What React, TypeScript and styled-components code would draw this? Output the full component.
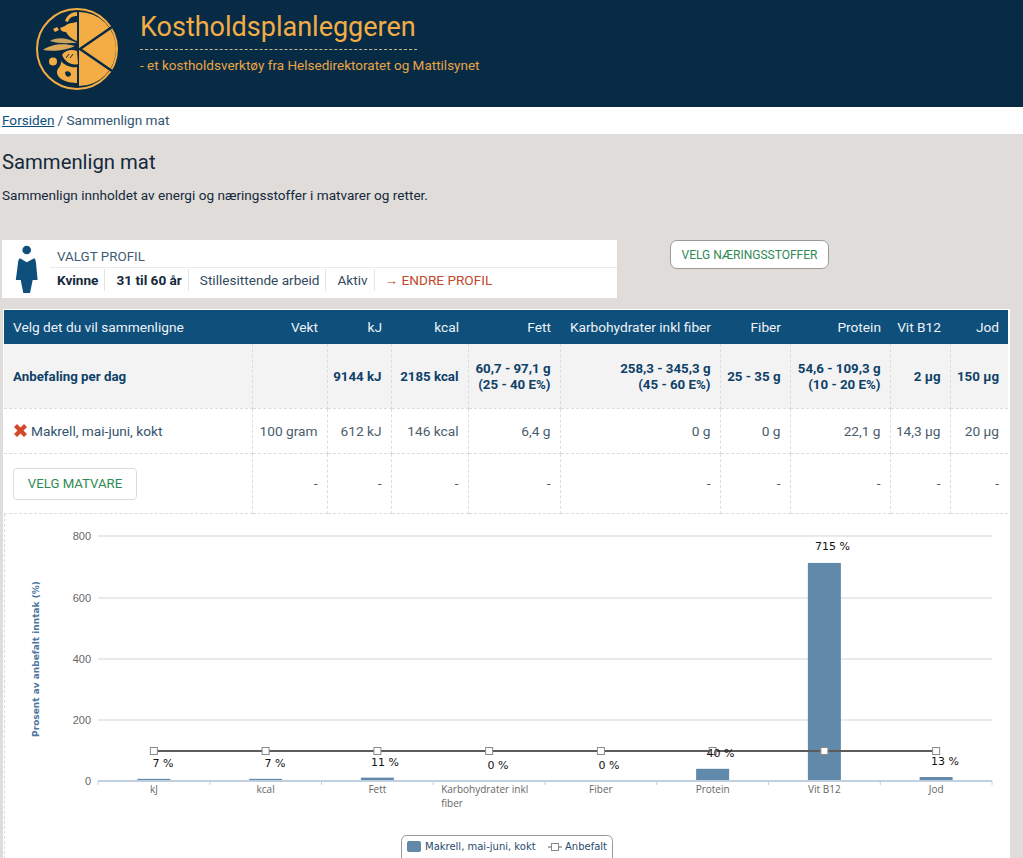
import styled, { createGlobalStyle } from "styled-components";

const GlobalStyle = createGlobalStyle`
  html, body {
    margin: 0;
    padding: 0;
    height: 858px;
    overflow: hidden;
    background: #e0dcd9;
    font-family: "Roboto", "Liberation Sans", sans-serif;
    color: #14293b;
  }
`;

const Header = styled.header`
  height: 107px;
  background: #082b45;
  display: flex;
  align-items: flex-start;
  padding: 4px 0 0 36px;
  box-sizing: border-box;
  gap: 14px;
`;

const Brand = styled.div`
  color: #f4ad45;
  padding-top: 6px;
`;

const BrandTitle = styled.div`
  font-size: 27px;
  line-height: 34px;
  width: 277px;
  height: 39px;
  border-bottom: 1px dashed #c9b48c;
`;

const BrandSub = styled.div`
  font-size: 13.5px;
  line-height: 18px;
  margin-top: 6px;
  color: #e8a546;
`;

const Crumbs = styled.nav`
  height: 27px;
  background: #fff;
  padding-left: 2px;
  font-size: 13.6px;
  line-height: 26px;
  color: #33536e;

  a {
    color: #0e4f7c;
    text-decoration: underline;
    margin-right: 3px;
  }
`;

const Main = styled.main`
  padding: 0 0 0 2px;
`;

const Title = styled.h1`
  margin: 0;
  padding-top: 15px;
  font-size: 20.3px;
  line-height: 26px;
  font-weight: 400;
`;

const Intro = styled.p`
  margin: 10px 0 0;
  font-size: 13.6px;
  line-height: 20px;
`;

const ProfileRow = styled.div`
  display: flex;
  align-items: flex-start;
  gap: 53px;
  margin-top: 35px;
`;

const ProfileCard = styled.section`
  width: 615px;
  height: 58px;
  background: #fff;
  display: flex;
`;

const ProfileIcon = styled.div`
  width: 48px;
  padding: 5px 0 0 13px;
  box-sizing: border-box;
`;

const ProfileBody = styled.div`
  flex: 1;
`;

const ProfileLabel = styled.div`
  height: 28px;
  box-sizing: border-box;
  border-bottom: 1px solid #eceaea;
  padding: 8px 0 0 7px;
  font-size: 13.4px;
  line-height: 18px;
  color: #3f5b74;
`;

const ProfileFacts = styled.div`
  display: flex;
  align-items: center;
  height: 24px;
  margin-top: 0;
`;

const Fact = styled.span<{ $strong?: boolean; $first?: boolean }>`
  padding: 0 6px 0 ${({ $first }) => ($first ? "7px" : "11px")};
  font-size: 13.6px;
  line-height: 22px;
  font-weight: ${({ $strong }) => ($strong ? 700 : 400)};
  color: ${({ $strong }) => ($strong ? "#14293b" : "#33495d")};
  border-right: 1px solid #e6e4e4;
`;

const ChangeLink = styled.a`
  padding-left: 10px;
  font-size: 13.6px;
  color: #c0492b;
`;

const OutlineButton = styled.button`
  width: 159px;
  height: 29px;
  background: #fff;
  border: 1px solid #9a9a9a;
  border-radius: 7px;
  font-family: inherit;
  font-size: 12px;
  color: #2f8a55;
  padding: 0;
`;

const TableFrame = styled.div`
  margin: 11px 0 0 1px;
  width: 1007px;
  height: 560px;
  background: #fff;
  border: 1px solid #fff;
  border-bottom: 0;
  box-sizing: border-box;
`;

const Table = styled.table`
  width: 1004px;
  table-layout: fixed;
  border-collapse: collapse;
  font-size: 13.7px;
`;

const HeadCell = styled.th<{ $left?: boolean }>`
  height: 34px;
  padding: 0 9px 0 ${({ $left }) => ($left ? "9px" : "0")};
  background: #0e4f7c;
  color: #eef3f7;
  font-weight: 400;
  text-align: ${({ $left }) => ($left ? "left" : "right")};
  white-space: nowrap;
`;

const Cell = styled.td<{ $left?: boolean }>`
  padding: 0 9px 0 ${({ $left }) => ($left ? "9px" : "0")};
  text-align: ${({ $left }) => ($left ? "left" : "right")};
  border: 1px dashed #dcdcdc;
  border-top: 0;
  color: #4a5d6c;
  line-height: 16px;
  white-space: nowrap;

  &:first-child {
    border-left: 0;
  }

  &:last-child {
    border-right: 0;
  }
`;

const RecommendRow = styled.tr`
  height: 64px;
  background: #f3f3f3;

  td {
    padding-top: 3px;
    font-size: 13.3px;
    font-weight: 700;
    color: #0e4168;
  }
`;

const FoodRow = styled.tr`
  height: 45px;
`;

const PickRow = styled.tr`
  height: 60px;
`;

const FoodName = styled.span`
  display: flex;
  align-items: center;
  gap: 3px;
  color: #33536e;
`;

const PickButton = styled.button`
  width: 124px;
  height: 32px;
  margin-top: 1px;
  background: #fff;
  border: 1px solid #dcdcdc;
  border-radius: 4px;
  font-family: inherit;
  font-size: 13.2px;
  color: #2f8a55;
  padding: 0;
`;

const ChartBox = styled.div`
  border-left: 1px dashed #d8d8d8;
  height: 350px;
`;

const ChartSvg = styled.svg`
  display: block;
`;

const columns = [248, 75, 64, 77, 92, 160, 70, 100, 60, 58];

const headers = [
  "Velg det du vil sammenligne",
  "Vekt",
  "kJ",
  "kcal",
  "Fett",
  "Karbohydrater inkl fiber",
  "Fiber",
  "Protein",
  "Vit B12",
  "Jod",
];

const recommended = [
  "Anbefaling per dag",
  "",
  "9144 kJ",
  "2185 kcal",
  "60,7 - 97,1 g\n(25 - 40 E%)",
  "258,3 - 345,3 g\n(45 - 60 E%)",
  "25 - 35 g",
  "54,6 - 109,3 g\n(10 - 20 E%)",
  "2 µg",
  "150 µg",
];

const food = ["100 gram", "612 kJ", "146 kcal", "6,4 g", "0 g", "0 g", "22,1 g", "14,3 µg", "20 µg"];

// chart coordinates are relative to the svg, which starts at page x=5, y=514
const plotLeft = 93;
const plotWidth = 894;
const zeroY = 267;
const slot = plotWidth / 8;

const series = [
  { name: "kJ", value: 7, labelY: 249, labelX: 158 },
  { name: "kcal", value: 7, labelY: 249, labelX: 270 },
  { name: "Fett", value: 11, labelY: 248, labelX: 380 },
  { name: "Karbohydrater inkl", second: "fiber", value: 0, labelY: 251, labelX: 493 },
  { name: "Fiber", value: 0, labelY: 251, labelX: 604 },
  { name: "Protein", value: 40, labelY: 239, labelX: 715.5 },
  { name: "Vit B12", value: 715, labelY: 32, labelX: 827.5 },
  { name: "Jod", value: 13, labelY: 247, labelX: 940 },
];

const grid = [
  { label: "800", y: 22 },
  { label: "600", y: 84 },
  { label: "400", y: 145 },
  { label: "200", y: 206 },
];

function Logo() {
  return (
    <svg width="90" height="90" viewBox="0 0 90 90">
      <circle cx="41" cy="45" r="40" fill="none" stroke="#f4ad45" strokeWidth="2" />
      <path d="M43 8 A37 37 0 0 1 43 82 Z" fill="#f4ad45" />
      <path d="M76 23 L44 45 L76 67" fill="none" stroke="#082b45" strokeWidth="2.5" />
      <path d="M29 17 C31 11 36 8 41 8 L41 12 C36 12 33 14 32 18 Z" fill="#f4ad45" />
      <path d="M17 25 L21 23 L23 26 L19 28 Z" fill="#f4ad45" />
      <path d="M24 24 L29 22 C32 19 36 19 41 18 L41 37 C35 35 32 31 30 28 C27 28 25 27 24 24 Z" fill="#f4ad45" />
      <path d="M14 37 C20 33 31 33 41 39 C31 39 22 40 14 37 Z" fill="#c9a25d" />
      <path d="M7 46 C15 40 28 39 39 42 C31 46 18 48 7 46 Z" fill="#d9a85a" />
      <path d="M26 51 C29 46 36 45 41 47 L42 60 C36 62 29 58 26 51 Z" fill="#f4ad45" />
      <path d="M33 50 L30 54 M37 50 L34 54" stroke="#082b45" strokeWidth="1" />
      <circle cx="17" cy="57.5" r="4" fill="#f4ad45" />
      <path d="M25 57 C29 62 36 64 41 63 L41 79 C33 79 21 76 21 68 C21 64 26 62 25 57 Z" fill="#f4ad45" />
      <path d="M29 68 C32 66 35 68 35 71 C33 74 29 73 29 68 Z" fill="#082b45" />
    </svg>
  );
}

function PersonIcon() {
  return (
    <svg width="24" height="50" viewBox="0 0 24 50">
      <circle cx="11.7" cy="5" r="4.3" fill="#0e4f7c" />
      <path d="M5 13.3 L11.7 17.3 L19.3 13.3 C20.5 14 20.6 15.5 21 18 L22.6 35 L17.7 35 L15 48 L8.3 48 L5.7 35 L0.8 35 L3 18 C3.3 15.5 3.6 14 5 13.3 Z" fill="#0e4f7c" />
    </svg>
  );
}

function RemoveIcon() {
  return (
    <svg width="15" height="15" viewBox="0 0 15 15">
      <path d="M1 4 L4 1 L7.5 4.5 L11 1 L14 4 L10.5 7.5 L14 11 L11 14 L7.5 10.5 L4 14 L1 11 L4.5 7.5 Z" fill="#d2492a" />
    </svg>
  );
}

function Chart() {
  return (
    <ChartSvg width="1004" height="350" viewBox="0 0 1004 350">
      {grid.map((g) => (
        <g key={g.label}>
          <line x1={plotLeft} x2={plotLeft + plotWidth} y1={g.y} y2={g.y} stroke="#d3d5d8" />
          <text x="86" y={g.y + 4} textAnchor="end" fontFamily="Liberation Sans" fontSize="11" fill="#666">
            {g.label}
          </text>
        </g>
      ))}
      <text x="86" y={zeroY + 4} textAnchor="end" fontFamily="Liberation Sans" fontSize="11" fill="#666">
        0
      </text>
      <text
        transform="translate(34 145) rotate(-90)"
        textAnchor="middle"
        fontFamily="DejaVu Sans"
        fontWeight="700"
        fontSize="9"
        fill="#4d759e"
      >
        Prosent av anbefalt inntak (%)
      </text>

      {series.map((s, i) => {
        const center = plotLeft + slot * i + slot / 2;
        const h = (s.value * 244) / 800;
        return <rect key={s.name} x={center - 16.5} y={zeroY - h} width="33" height={h} fill="#6089aa" />;
      })}

      <line x1={plotLeft} x2={plotLeft + plotWidth} y1={zeroY} y2={zeroY} stroke="#c0d0e0" strokeWidth="2" />
      {series.map((_, i) => (
        <line
          key={i}
          x1={plotLeft + slot * i}
          x2={plotLeft + slot * i}
          y1={zeroY}
          y2={zeroY + 4}
          stroke="#c0d0e0"
        />
      ))}
      <line x1={plotLeft + plotWidth} x2={plotLeft + plotWidth} y1={zeroY} y2={zeroY + 4} stroke="#c0d0e0" />

      <line
        x1={plotLeft + slot / 2}
        x2={plotLeft + slot * 7.5}
        y1="237"
        y2="237"
        stroke="#5c5c5c"
        strokeWidth="2"
      />
      {series.map((s, i) => (
        <rect
          key={s.name}
          x={plotLeft + slot * i + slot / 2 - 3.5}
          y="233.5"
          width="7"
          height="7"
          fill="#fff"
          stroke="#8a8a8a"
        />
      ))}

      {series.map((s, i) => {
        const center = plotLeft + slot * i + slot / 2;
        return (
          <g key={s.name} fontFamily="Open Sans" fontSize="10" fill="#666">
            <text x={s.second ? center - 48 : center} y="279" textAnchor={s.second ? "start" : "middle"}>
              {s.name}
            </text>
            {s.second && (
              <text x={center - 48} y="293">
                {s.second}
              </text>
            )}
          </g>
        );
      })}

      {series.map((s) => (
        <text
          key={s.name}
          x={s.labelX}
          y={s.labelY + 4}
          textAnchor="middle"
          fontFamily="DejaVu Sans"
          fontSize="11"
          fill="#111"
        >
          {s.value} %
        </text>
      ))}

      <rect x="396.5" y="321.5" width="211" height="40" rx="5" fill="#fff" stroke="#999" />
      <rect x="402" y="327" width="14" height="11" rx="2" fill="#6089aa" />
      <text x="420" y="335.5" fontFamily="DejaVu Sans" fontSize="10" fill="#274b6d">
        Makrell, mai-juni, kokt
      </text>
      <line x1="543" x2="557" y1="333" y2="333" stroke="#5c5c5c" />
      <rect x="546.5" y="329.5" width="7" height="7" fill="#fff" stroke="#8a8a8a" />
      <text x="560" y="335.5" fontFamily="DejaVu Sans" fontSize="10" fill="#274b6d">
        Anbefalt
      </text>
    </ChartSvg>
  );
}

function Lines({ text }: { text: string }) {
  const parts = text.split("\n");
  return (
    <>
      {parts.map((p, i) => (
        <span key={p}>
          {i > 0 && <br />}
          {p}
        </span>
      ))}
    </>
  );
}

export default function App() {
  return (
    <>
      <GlobalStyle />
      <Header>
        <Logo />
        <Brand>
          <BrandTitle>Kostholdsplanleggeren</BrandTitle>
          <BrandSub>- et kostholdsverktøy fra Helsedirektoratet og Mattilsynet</BrandSub>
        </Brand>
      </Header>
      <Crumbs>
        <a href="#">Forsiden</a>/ Sammenlign mat
      </Crumbs>
      <Main>
        <Title>Sammenlign mat</Title>
        <Intro>Sammenlign innholdet av energi og næringsstoffer i matvarer og retter.</Intro>
        <ProfileRow>
          <ProfileCard>
            <ProfileIcon>
              <PersonIcon />
            </ProfileIcon>
            <ProfileBody>
              <ProfileLabel>VALGT PROFIL</ProfileLabel>
              <ProfileFacts>
                <Fact $strong $first>Kvinne</Fact>
                <Fact $strong>31 til 60 år</Fact>
                <Fact>Stillesittende arbeid</Fact>
                <Fact>Aktiv</Fact>
                <ChangeLink>→ ENDRE PROFIL</ChangeLink>
              </ProfileFacts>
            </ProfileBody>
          </ProfileCard>
          <OutlineButton>VELG NÆRINGSSTOFFER</OutlineButton>
        </ProfileRow>
        <TableFrame>
          <Table>
            <colgroup>
              {columns.map((w, i) => (
                <col key={i} width={w} />
              ))}
            </colgroup>
            <thead>
              <tr>
                {headers.map((h, i) => (
                  <HeadCell key={h} $left={i === 0}>
                    {h}
                  </HeadCell>
                ))}
              </tr>
            </thead>
            <tbody>
              <RecommendRow>
                {recommended.map((r, i) => (
                  <Cell key={i} $left={i === 0}>
                    <Lines text={r} />
                  </Cell>
                ))}
              </RecommendRow>
              <FoodRow>
                <Cell $left>
                  <FoodName>
                    <RemoveIcon />
                    Makrell, mai-juni, kokt
                  </FoodName>
                </Cell>
                {food.map((f) => (
                  <Cell key={f}>{f}</Cell>
                ))}
              </FoodRow>
              <PickRow>
                <Cell $left>
                  <PickButton>VELG MATVARE</PickButton>
                </Cell>
                {food.map((f) => (
                  <Cell key={f}>-</Cell>
                ))}
              </PickRow>
            </tbody>
          </Table>
          <ChartBox>
            <Chart />
          </ChartBox>
        </TableFrame>
      </Main>
    </>
  );
}
